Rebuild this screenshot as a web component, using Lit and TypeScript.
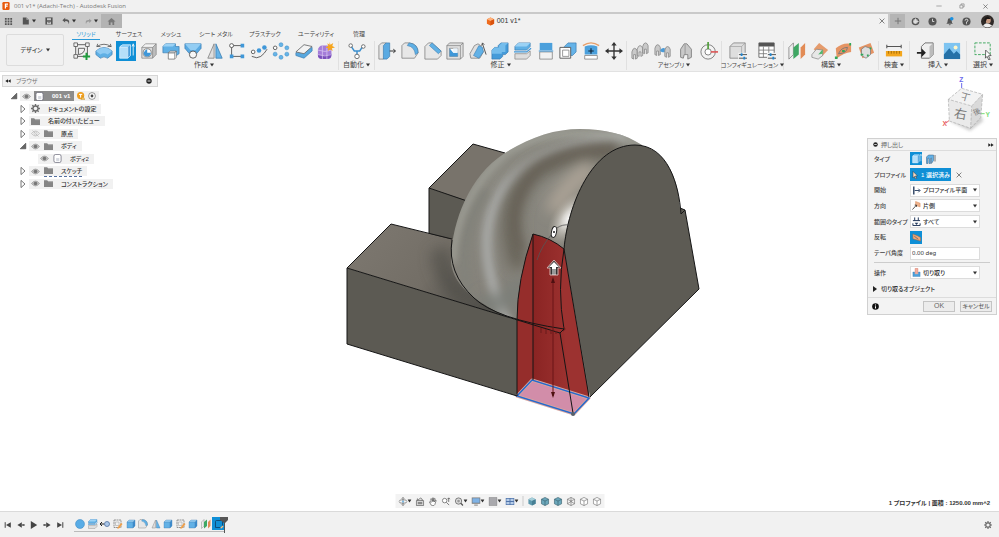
import { LitElement, html, css, svg, nothing } from "lit";
import { customElement } from "lit/decorators.js";

type Part = ReturnType<typeof svg>;

const box = (front = "#62b1e6", top = "#9bd2f5", side = "#3f8fd0", edge = "#3478ad") => svg`
  <path d="M2 6 6 2h12l-4 4z" fill=${top}/><path d="M2 6h12v12H2z" fill=${front}/>
  <path d="m14 6 4-4v12l-4 4z" fill=${side}/><path d="M2 6 6 2h12v12l-4 4H2zM2 6h12v12M14 6l4-4" fill="none" stroke=${edge} stroke-width=".7"/>`;
const grayBox = () => box("#dcdcdc", "#f3f3f3", "#bdbdbd", "#777");
const bracket = (x: number, y: number, c = "#c9c9c9") => svg`<path d=${`M${x} ${y + 11}V${y + 4}q1-4 3-4t3 3v8l-2 1v-5h-2v5z`} fill=${c} stroke="#808080" stroke-width=".8"/>`;
const adjust = svg`<path d="M11 14h9M11 18h9" stroke="#333" stroke-width=".9"/><path d="M14 12.500v3M17 16.500v3" stroke="#1f86d0" stroke-width="2"/>`;

const ICONS: Record<string, Part> = {
  sketch: svg`<path d="M3 3h13v13H3z" fill="none" stroke="#555" stroke-width="1"/><path d="M1 1h4v4H1zM14 1h4v4h-4zM1 14h4v4H1z" fill="#f1f1f1" stroke="#555" stroke-width=".9"/><path d="M6 7h7q0 6-7 7z" fill="none" stroke="#555"/><path d="M15 12v8M11 16h8" stroke="#1f9d3d" stroke-width="2.2"/>`,
  form: svg`<path d="M1 10q9-8 18 0v4l-5 4q-4-3-8 0l-5-4z" fill="#5fb0e5" stroke="#3478ad" stroke-width=".7"/><path d="M1 10q9-8 18 0l-5 4q-4-3-8 0z" fill="#8fcbf3"/><path d="M2 5q8-5 16 0M2 5l1-3M2 5h4M18 5l-1-3M18 5h-4" stroke="#555" fill="none" stroke-width=".9"/>`,
  extrude: svg`<path d="M3 5q1-2 3-2h9v12l-3 3H3z" fill="#8ccdf6"/><path d="M3 6h9v12H3z" fill="#b5dff9"/><path d="m12 6 3-3v12l-3 3z" fill="#4c9edb"/><path d="M3 6 6 3h9v12l-3 3H3zM3 6h9v12" fill="none" stroke="#e9f6ff" stroke-width=".7"/><path d="M18 3v12M16.800 5 18 2l1.200 3" stroke="#fff" fill="none" stroke-width=".9"/>`,
  hole: svg`${grayBox()}<circle cx="8" cy="12" r="4.500" fill="#fff" stroke="#666" stroke-width=".8"/><path d="M8 8v4h4q0 4-4 4t-4-4q2-4 4-4" fill="#3f97d8"/>`,
  combine2: svg`<path d="M1 5 4 2h11v3h4v8l-3 2H8v-3H1z" fill="#60b0e5" stroke="#3478ad" stroke-width=".7"/><path d="M1 5h11l3-3H4z" fill="#9bd2f5"/><path d="M7 12h7v7H7z" fill="#fff" stroke="#666" stroke-width=".8"/><path d="m7 12 2-2h7l-2 2zM14 12l2-2v7l-2 2" fill="#ddd" stroke="#666" stroke-width=".6"/>`,
  loft: svg`<path d="M1 2h18v5l-5 6H6L1 7z" fill="#5aaae2" stroke="#3478ad" stroke-width=".7"/><path d="m1 2 6 7h6l6-7z" fill="#93cdf3"/><circle cx="10" cy="14" r="4" fill="#f7f7f7" stroke="#555" stroke-width="1"/>`,
  mirror: svg`<path d="M9 2v16H2z" fill="#ddd" stroke="#777" stroke-width=".8"/><path d="M11 2v16h7z" fill="#65b3e8" stroke="#3478ad" stroke-width=".8"/>`,
  nodes: svg`<path d="M4 4h12M4 4v12M4 16h12" stroke="#555" fill="none" stroke-width="1"/><circle cx="4" cy="4" r="2.200" fill="#fff" stroke="#555"/><path d="M14 2h4v4h-4zM2 14h4v4H2zM14 14h4v4h-4z" fill="#3f97d8"/>`,
  path: svg`<path d="M2 16q6 3 10 0t7-8" fill="none" stroke="#555" stroke-width="1"/><circle cx="3.500" cy="11" r="2" fill="#fff" stroke="#555"/><circle cx="10" cy="9.500" r="2.500" fill="#3f97d8"/><circle cx="16" cy="6" r="2.500" fill="#3f97d8"/>`,
  circlePattern: svg`<g fill="#66b4e8" stroke="#3f8fc8" stroke-width=".6"><circle cx="10" cy="3" r="2.200"/><circle cx="16.500" cy="6.500" r="2.200"/><circle cx="16.500" cy="13.500" r="2.200"/><circle cx="10" cy="17" r="2.200"/><circle cx="3.500" cy="13.500" r="2.200"/></g><circle cx="3.500" cy="6.500" r="2" fill="#fff" stroke="#555"/>`,
  thicken: svg`<path d="m1 12 9-8 9 2v4l-9 8-9-3z" fill="#58a8df" stroke="#3478ad" stroke-width=".7"/><path d="m1 11 9-8 9 2-9 8z" fill="#f3f3f3" stroke="#666" stroke-width=".9"/>`,
  freeform: svg`<rect x="1" y="4" width="15" height="15" rx="5" fill="#a47cd8"/><path d="M1 14q7 3 15-1v2q0 4-5 4H6q-5 0-5-4z" fill="#7a4fbb"/><path d="M6 4v15M11 5v14M1 9q8 3 15 0M1 14q8 3 15 0" stroke="#dac7f2" stroke-width=".8" fill="none"/><path d="m14 0 1 3 3-2-1 3.500 3 1.500-3.500 1 1 3-3-2-2.500 2 .5-3-3-1 3-1.500-1-3 2.500 1.500z" fill="#f6a51c"/>`,
  automate: svg`<path d="m3 4 4 6h6l4-6M10 10v6" fill="none" stroke="#3b8fce" stroke-width="1.600"/><g fill="#fff" stroke="#666"><circle cx="3" cy="4" r="2"/><circle cx="17" cy="5" r="2"/><circle cx="10" cy="16" r="2.500"/></g>`,
  press: svg`<path d="M1 4 4 1h5v15l-3 3H1z" fill="#e5e5e5" stroke="#777" stroke-width=".8"/><path d="m6 4 3-3h4v15l-3 3H6z" fill="#5aaae2" stroke="#3478ad" stroke-width=".7"/><path d="M13 10h6M17 8l2.500 2L17 12" stroke="#222" fill="none" stroke-width="1"/>`,
  fillet: svg`<path d="M1 4 4 1h5q10 1 10 11l-4 6H1z" fill="#e7e7e7" stroke="#777" stroke-width=".8"/><path d="M7 4 9 1q10 1 10 11l-3 2Q15 5 7 4z" fill="#5fb0e5" stroke="#3478ad" stroke-width=".6"/>`,
  chamfer: svg`<path d="M1 5 5 1h4l10 9v5l-4 4H1z" fill="#e7e7e7" stroke="#777" stroke-width=".8"/><path d="m6 4 3-3 10 9-3 3z" fill="#5fb0e5" stroke="#3478ad" stroke-width=".6"/>`,
  shell: svg`<path d="M1 4 4 1h15v15l-3 3H1z" fill="#e0e0e0" stroke="#777" stroke-width=".8"/><path d="M1 4h15v15M16 4l3-3" fill="none" stroke="#777" stroke-width=".7"/><path d="M4 7h9v9H4z" fill="#fff" stroke="#666" stroke-width=".7"/><path d="M4 7l4 5h5v4H4z" fill="#3f97d8"/><path d="M8 7v5h5V7z" fill="#e8f3fb"/>`,
  draft: svg`<path d="M1 13 6 4l4-2 3 2 3 7-4 7H2z" fill="#e0e0e0" stroke="#777" stroke-width=".8"/><path d="m5 15 6-11 4 2 1 5-5 7z" fill="#62b1e6" stroke="#3478ad" stroke-width=".6"/><path d="m19 14-4-12M14 4l1-3 2 2" stroke="#333" fill="none" stroke-width=".9"/>`,
  combine: svg`<path d="M1 9 4 6h4V4l3-3h8v10l-3 3h-3v2l-3 3H1z" fill="#459bd9" stroke="#3478ad" stroke-width=".7"/><path d="M1 9 4 6h5V4l3-3h7l-3 3v7h-4v2H1z" fill="#75bdec"/>`,
  offset: svg`<path d="m1 5 4-4h13v4l-4 4H1z" fill="#60b0e5" stroke="#3478ad" stroke-width=".7"/><path d="m1 5 4-4h13l-4 4z" fill="#9bd2f5"/><path d="M0 11h14l5-4" stroke="#3f97d8" stroke-width="1.300" fill="none"/><path d="M1 13h13l4-3v5l-4 4H1z" fill="#dedede" stroke="#777" stroke-width=".7"/>`,
  split: svg`<path d="M3 1h14v8H3z" fill="#4ba0dc"/><path d="M3 11h14v8H3z" fill="#f2f2f2" stroke="#777" stroke-width=".8"/><path d="M2 10h16" stroke="#3f97d8" stroke-width="1.200"/>`,
  scale: svg`<path d="M6 5 10 1h9v10l-4 4H6z" fill="#65b3e8" stroke="#3478ad" stroke-width=".7"/><path d="M1 6h12v12H1z" fill="#fff" stroke="#555" stroke-width="1"/><path d="M4 9h7v7H4z" fill="#fff" stroke="#777" stroke-width=".8"/>`,
  replace: svg`<path d="M1 4q9-6 18 0" stroke="#e7a06c" fill="none" stroke-width="1.500"/><path d="M3 5q7-3 14 0v9H3z" fill="#4ba0dc"/><path d="M3 15h14v4H3z" fill="#fff" stroke="#777" stroke-width=".8"/><path d="M10 7v6M7 10h6" stroke="#123" stroke-width="1.200"/>`,
  move: svg`<path d="M10 2v16M2 10h16" stroke="#333" stroke-width="1.500"/><path d="m10 0 3 4H7zM10 20l3-4H7zM0 10l4-3v6zM20 10l-4-3v6z" fill="#333"/>`,
  asm1: svg`${bracket(1, 7)}${bracket(7, 4, "#dadada")}${bracket(13, 1)}`,
  asm2: svg`${bracket(1, 3)}<path d="M7 9q2-3 5-2v4q-3 1-5-1z" fill="#4a9bd8"/>${bracket(12, 5)}`,
  asm3: svg`<path d="M4 17V8l4-6h3l5 6v9l-4 2v-5H8l-1 4z" fill="#c9c9c9" stroke="#777" stroke-width=".9"/><path d="M9 3v11" stroke="#888" stroke-width=".8"/>`,
  joint: svg`<circle cx="9" cy="11" r="8" fill="#f3f3f3" stroke="#777"/><circle cx="9" cy="11" r="3.500" fill="#fff" stroke="#777"/><path d="M9 8V0" stroke="#4b9b35" stroke-width="1.800"/><path d="M12 11h8" stroke="#dc5858" stroke-width="1.800"/>`,
  config: svg`<path d="M1 5 5 1h13v13l-4 4H1z" fill="#dedede" stroke="#777" stroke-width=".8"/><path d="M1 5h13v13M14 5l4-4" fill="none" stroke="#999" stroke-width=".7"/><path d="M10 12h10v8H10z" fill="#f1f1f1"/>${adjust}`,
  table: svg`<path d="M1 1h17v16H1z" fill="#fff" stroke="#666"/><path d="M1 1h17v4H1z" fill="#555"/><path d="M1 9h17M1 13h17M6 5v12M12 5v12" stroke="#777" stroke-width=".9"/><path d="M10 12h10v8H10z" fill="#f1f1f1"/>${adjust}`,
  plane1: svg`<path d="M1 6 6 1v13l-5 5z" fill="#eee" stroke="#777" stroke-width=".8"/><path d="m6 6 6-5v13l-6 5z" fill="#3fa864"/><path d="m14 6 5-5v13l-5 5z" fill="#e28b55"/>`,
  plane2: svg`<path d="m9 1 10 8-7 7-9-8z" fill="#e59b6c"/><path d="m1 14 5-6 7 1v6l-5 4-7-2z" fill="#e7e7e7" stroke="#777" stroke-width=".7"/><path d="m13 8-5 6 5-1z" fill="#50b86c"/>`,
  plane3: svg`<path d="M2 7q8-7 17-5v9q-8 1-16 7z" fill="#e59464"/><path d="M5 13q3-7 10-7-1 7-10 7" fill="none" stroke="#777" stroke-width="1"/><path d="M1 16h3v3H1zM17 1h2v3h-2zM9 9h3v2H9z" fill="#2fa85a"/>`,
  plane4: svg`<path d="m2 6 13-5 4 11-13 6z" fill="#e59464"/><path d="m5 8 4-3 6 2v7l-5 4-5-3z" fill="#ddd" stroke="#777" stroke-width=".8"/><path d="M14 6h2v2h-2zM4 13h3v2H4zM11 14h2v2h-2z" fill="#2fa85a"/>`,
  ruler: svg`<path d="M2 5h16M2 3v4M18 3v4" stroke="#555" stroke-width="1.200"/><path d="M1 10h18v6H1z" fill="#f3a61d"/><path d="M4 10v3M7 10v3M10 10v3M13 10v3M16 10v3" stroke="#8a5a00" stroke-width=".8"/>`,
  insert: svg`<path d="m6 5 4-4h9v13l-4 4H6z" fill="#eee" stroke="#666"/><path d="m15 5 4-4v13l-4 4z" fill="#bbb"/><path d="M1 11h5V7l5 5-5 5v-4H1z" fill="#222"/>`,
  image: svg`<path d="M1 1h18v18H1z" fill="#7ec4f1"/><path d="M1 14 7 7l5 6 3-3 4 4v5H1z" fill="#2471a8"/><circle cx="14" cy="6" r="2.200" fill="#fff6c8"/>`,
  select: svg`<path d="M1 1h17v13H1z" fill="none" stroke="#35a457" stroke-width="1" stroke-dasharray="3 1.500"/><path d="m13 9 6 6-3 .3 2 4-1.500.7-2-4-1.800 2z" fill="#fff" stroke="#333" stroke-width=".8"/>`,
  grid: svg`<g fill="#555"><path d="M2 2h4v4H2zM8 2h4v4H8zM14 2h4v4h-4zM2 8h4v4H2zM8 8h4v4H8zM14 8h4v4h-4zM2 14h4v4H2zM8 14h4v4H8zM14 14h4v4h-4z"/></g>`,
  file: svg`<path d="M2 1h9l6 6v12H2z" fill="#555"/><path d="M11 1v6h6" fill="#aaa"/>`,
  save: svg`<path d="M1 1h18v18H1z" fill="#555"/><path d="M5 3h10v5H5zM5 12h10v6H5z" fill="#c9c9c9"/><path d="M7 14h6" stroke="#555" stroke-width="1.500"/>`,
  undo: svg`<path d="M8 2 1 8l7 6v-4q8-1 9 8 4-13-9-12z" fill="#555"/>`,
  redo: svg`<path d="m12 2 7 6-7 6v-4q-8-1-9 8-4-13 9-12z" fill="#999"/>`,
  home: svg`<path d="M10 2 1 10h3v8h12v-8h3z" fill="#777"/><path d="M8 12h4v6H8z" fill="#b3b3b3"/>`,
  cube: svg`<path d="m10 1 8 4v10l-8 4-8-4V5z" fill="#ee6a1c"/><path d="m10 1 8 4-8 4-8-4z" fill="#ffb27c"/><path d="m10 9 8-4v10l-8 4z" fill="#d9520d"/>`,
  logo: svg`<rect x="1" y="0" width="18" height="20" rx="3" fill="#e8590c"/><path d="M7 4h8v3h-5v2h4v3h-4v4H7z" fill="#fff"/>`,
  plus: svg`<path d="M10 2v16M2 10h16" stroke="#777" stroke-width="2.500"/>`,
  close: svg`<path d="m4 4 12 12M16 4 4 16" stroke="#555" stroke-width="1.800"/>`,
  min: svg`<path d="M1 10h18" stroke="#777" stroke-width="2"/>`,
  max: svg`<path d="M3 7h10v10H3zM7 7V3h10v10h-4" fill="none" stroke="#777" stroke-width="2"/>`,
  ext: svg`<circle cx="10" cy="10" r="7" fill="none" stroke="#555" stroke-width="3"/><path d="M10 3v7h7" stroke="#ddd" stroke-width="2" fill="none"/><circle cx="9" cy="11" r="3" fill="#ddd"/>`,
  clock: svg`<circle cx="10" cy="10" r="9" fill="#555"/><path d="M10 4v6h4" stroke="#ddd" stroke-width="2" fill="none"/>`,
  bell: svg`<path d="M3 15q3-2 3-7t4-5q5 0 5 6t3 6zM8 16h5l-2 3z" fill="#555"/><circle cx="15" cy="4" r="4" fill="#1a90e0"/>`,
  help: svg`<circle cx="10" cy="10" r="9" fill="#555"/><path d="M7 8q0-3 3-3t3 3q0 2-3 3v2M10 14v2" stroke="#eee" stroke-width="2" fill="none"/>`,
  avatar: svg`<circle cx="10" cy="10" r="10" fill="#2f2a28"/><ellipse cx="11" cy="8" rx="4" ry="5" fill="#c79a82"/><path d="M3 17q3-5 7-4l3 1 4 2q-6 6-14 1" fill="#eee"/><path d="M5 8q1-7 8-5l2 3-6 0-2 5z" fill="#1c1817"/>`,
  eye: svg`<path d="M1 10q9-11 18 0-9 11-18 0z" fill="#c4c4c4" stroke="#8a8a8a" stroke-width="1.300"/><circle cx="10" cy="10" r="4" fill="#777"/>`,
  eyeOff: svg`<path d="M1 10q9-11 18 0-9 11-18 0z" fill="none" stroke="#aaa" stroke-width="1.300"/><circle cx="10" cy="10" r="3.500" fill="none" stroke="#aaa"/><path d="m3 3 14 14" stroke="#aaa"/>`,
  folder: svg`<path d="M0 3h7l2 2h11v13H0z" fill="#858585"/><path d="M9 6h11" stroke="#c2c2c2" stroke-width="1"/>`,
  gear: svg`<path d="M10 0v20M0 10h20M3 3l14 14M17 3 3 17" stroke="#6d6d6d" stroke-width="3"/><circle cx="10" cy="10" r="7" fill="#6d6d6d"/><circle cx="10" cy="10" r="4" fill="#f3f3f3"/>`,
  body: svg`<rect x="2" y="1" width="16" height="18" rx="4" fill="#fff" stroke="#667" stroke-width="1.600"/><path d="M7 9h7v7H7z" fill="#d5d8df"/>`,
  open: svg`<path d="M17 3v14H3z" fill="#666" stroke="#444" stroke-width="1.500"/>`,
  shut: svg`<path d="M5 1v18l10-9z" fill="#fff" stroke="#555" stroke-width="2"/>`,
  warn: svg`<circle cx="9" cy="9" r="9" fill="#f0a020"/><path d="M5 6h8M9 6v8" stroke="#fff" stroke-width="2.500"/><path d="m15 11 5 8H10z" fill="#f6c35a" stroke="#a86c00" stroke-width=".8"/>`,
  radio: svg`<circle cx="10" cy="10" r="8.500" fill="#fff" stroke="#555" stroke-width="1.500"/><circle cx="10" cy="10" r="3.500" fill="#444"/>`,
  left2: svg`<path d="M10 4v12L1 10zM19 4v12l-9-6z" fill="#222"/>`,
  right2: svg`<path d="M10 4v12l9-6zM1 4v12l9-6z" fill="#222"/>`,
  dot: svg`<circle cx="10" cy="10" r="9" fill="#222"/><path d="M5 10h10" stroke="#fff" stroke-width="3"/>`,
  info: svg`<circle cx="10" cy="10" r="9.500" fill="#111"/><path d="M10 4v3M10 9v7" stroke="#fff" stroke-width="3"/>`,
  start: svg`<path d="M4 1v18" stroke="#23395b" stroke-width="3"/><path d="M6 10h11M14 6l4 4-4 4" stroke="#23395b" stroke-width="2" fill="none"/>`,
  side: svg`<path d="m8 1 10 4v8L8 10z" fill="#f0b48e" stroke="#d37c46"/><path d="m1 19 9-10M6 9h4v4" stroke="#333" fill="none" stroke-width="1.800"/>`,
  all: svg`<path d="M2 14v5h16v-5M2 8h16M6 1v7M14 1v7" stroke="#23395b" stroke-width="2.200" fill="none"/><path d="m10 18-4-5h8z" fill="#23395b"/>`,
  flip: svg`<path d="m2 2 10 4 7 4v8L2 13z" fill="#f0a878" stroke="#a0623a" stroke-width="1"/><path d="M5 7l9 7" stroke="#45576a" stroke-width="1.500"/>`,
  cut: svg`<path d="M2 9h4v5h8V9h4v10H2z" fill="#4ba0dc" stroke="#3478ad" stroke-width=".8"/><path d="M7 1h6v11H7z" fill="#f3b0a0" stroke="#d26a58" stroke-width="1"/>`,
  cursor: svg`<path d="m5 1 11 11-5 .5 3 6-3 1-2.500-6L5 17z" fill="#f5d9c5" stroke="#333" stroke-width="1.200"/>`,
  thin: svg`<path d="m1 6 4-4h10v11l-4 6V8l-2 1v10H6V9L4 8v11H1z" fill="#62b1e6" stroke="#345c80" stroke-width="1"/><path d="M18 2v13" stroke="#333" stroke-width="1.300"/>`,
  orbit: svg`<ellipse cx="10" cy="10" rx="9" ry="4" fill="none" stroke="#555" stroke-width="1.300"/><path d="M10 1v18M7 4l3-3 3 3M7 16l3 3 3-3" fill="none" stroke="#555" stroke-width="1.300"/><circle cx="10" cy="10" r="2.500" fill="#80bde6"/>`,
  look: svg`<path d="M2 8h16v11H2zM4 8V4l3 2 4-4 4 3v3" fill="#ddd" stroke="#555" stroke-width="1.500"/><path d="M5 11h10v5H5z" fill="#888"/>`,
  hand: svg`<path d="m6 18-4-7 1-1 3 2L5 4h2l2 6V2h2v8l2-7 2 1-2 7 3-4 1 1-3 9-2 2H8z" fill="#fff" stroke="#444" stroke-width="1.300"/>`,
  zoomPan: svg`<circle cx="7" cy="8" r="5" fill="#fff" stroke="#555" stroke-width="1.500"/><path d="m11 12 6 6M16 2v9M13 5l3-3 3 3" stroke="#555" stroke-width="1.700" fill="none"/>`,
  fit: svg`<circle cx="9" cy="9" r="7" fill="#ddd" stroke="#555" stroke-width="1.600"/><circle cx="9" cy="9" r="3" fill="#999"/><path d="m14 14 5 5" stroke="#555" stroke-width="3"/>`,
  display: svg`<path d="M0 1h20v14H0z" fill="#777"/><path d="M2 3h16v10H2z" fill="#7fb2e5"/><path d="M6 18h8" stroke="#777" stroke-width="2"/>`,
  shade: svg`<path d="M1 1h18v18H1z" fill="#a9a9ad" stroke="#777"/>`,
  views: svg`<path d="M0 2h20v16H0z" fill="#4f73aa"/><path d="M2 4h7v5H2zM11 4h7v5h-7zM2 11h7v5H2zM11 11h7v5h-7z" fill="#b6cde9"/>`,
  solidBox: svg`<path d="m10 1 8 4v10l-8 4-8-4V5z" fill="#5c98ad"/><path d="m10 1 8 4-8 4-8-4z" fill="#a6cfda"/><path d="m10 9 8-4v10l-8 4z" fill="#477f94"/>`,
  solidEdge: svg`<path d="m10 1 8 4v10l-8 4-8-4V5z" fill="#6ba7bb" stroke="#375f6e" stroke-width="1.400"/><path d="m2 5 8 4 8-4M10 9v10" fill="none" stroke="#375f6e" stroke-width="1.400"/>`,
  wire: svg`<path d="m10 1 8 4v10l-8 4-8-4V5zM2 5l8 4 8-4M10 9v10M2 15l8-5 8 5M10 1v9" fill="none" stroke="#666" stroke-width="1.300"/>`,
  wireFront: svg`<path d="m10 1 8 4v10l-8 4-8-4V5zM2 5l8 4 8-4M10 9v10" fill="#fff" stroke="#666" stroke-width="1.300"/>`,
  first: svg`<path d="M3 3v14" stroke="#444" stroke-width="2.500"/><path d="M17 3v14L5 10z" fill="#444"/>`,
  prev: svg`<path d="M12 3v14L1 10z" fill="#444"/><path d="M13 10h6" stroke="#444" stroke-width="4"/>`,
  play: svg`<path d="M2 0v20l16-10z" fill="#444"/>`,
  next: svg`<path d="M8 3v14l11-7z" fill="#444"/><path d="M1 10h6" stroke="#444" stroke-width="4"/>`,
  last: svg`<path d="M17 3v14" stroke="#444" stroke-width="2.500"/><path d="M3 3v14l12-7z" fill="#444"/>`,
  sphere: svg`<circle cx="10" cy="10" r="9" fill="#58ace6" stroke="#3b87c0"/>`,
  tlSketch: svg`<path d="M2 2h14v15H2z" fill="none" stroke="#777" stroke-width="1.500" stroke-dasharray="4 1"/><path d="M5 6h7v7H5z" fill="none" stroke="#999"/><path d="m9 17 7-9 3 2-6 8-4 2z" fill="#f0a04a"/>`,
  tlMove: svg`<path d="M0 10h9M4 6l-4 4 4 4" stroke="#222" stroke-width="2" fill="none"/><circle cx="14" cy="10" r="5" fill="#abc7e8" stroke="#4b6b9b" stroke-width="1.500"/>`,
  tlCurrent: svg`<path d="M3 5q0-2 2-2h12v11l-3 3H3z" fill="none" stroke="#0b3d66" stroke-width="1.600"/><path d="m12 18 5-5 2 2-4 4z" fill="#f0c48a"/>`,
};
ICONS.solid = box();

const icon = (name: string, size: number) => html`<svg class="ic" viewBox="0 0 20 20" width=${size} height=${size} aria-hidden="true">${ICONS[name]}</svg>`;
const caret = html`<svg class="ic" viewBox="0 0 4 4" width="4" height="4" aria-hidden="true"><path d="M0 .5h4L2 3.500z" fill="#333"/></svg>`;

const shared = css`
  * { box-sizing: border-box; }
  .ic { display: block; flex: none; }
  button { font: inherit; color: inherit; background: none; border: 0; padding: 0; margin: 0;
    display: flex; align-items: center; justify-content: center; cursor: pointer; white-space: nowrap; }
`;

@customElement("title-area")
export class TitleArea extends LitElement {
  static styles = [shared, css`
    :host { display: block; background: #f1f1f1; }
    .title { display: flex; align-items: center; height: 12px; padding: 0 10px 0 2px; color: #777; }
    .name { margin-left: 4px; flex: 1; font: 6px "Open Sans", sans-serif; }
    .controls { display: flex; gap: 17px; }
    .bar { display: flex; height: 16px; background: #c9c9c9; border-top: 2px solid #c9c9c9; }
    .quick { display: flex; align-items: center; width: 101px; padding-left: 4px; gap: 9px; }
    .pair { gap: 2px; }
    .home { width: 21px; background: #b3b3b3; }
    .doc { flex: 1; display: flex; align-items: center; background: #f1f1f1; padding-right: 2px; }
    .tab { flex: 1; display: flex; justify-content: center; align-items: center; gap: 2px; padding-left: 6px; color: #333; font-size: 7px; }
    .add { width: 15px; background: #b5b5b5; margin-left: 2px; }
    .status { display: flex; align-items: center; gap: 8px; padding: 0 5px 0 6px; }
    .status .wide { margin-left: 2px; }
  `];
  render() {
    return html`
      <div class="title">${icon("logo", 8)}<span class="name">001 v1* (Adachi-Tech) - Autodesk Fusion</span>
        <div class="controls">
          <button aria-label="最小化">${icon("min", 6)}</button><button aria-label="元に戻す">${icon("max", 6)}</button><button aria-label="閉じる">${icon("close", 7)}</button>
        </div>
      </div>
      <div class="bar">
        <div class="quick">
          <button aria-label="データ パネル">${icon("grid", 9)}</button>
          <button class="pair" aria-label="ファイル">${icon("file", 8)}${caret}</button>
          <button aria-label="保存">${icon("save", 8)}</button>
          <button class="pair" aria-label="取り消し">${icon("undo", 8)}${caret}</button>
          <button class="pair" aria-label="やり直し">${icon("redo", 7)}${caret}</button>
        </div>
        <button class="home" aria-label="ホーム">${icon("home", 9)}</button>
        <div class="doc"><div class="tab">${icon("cube", 9)}<span>001 v1*</span></div><button aria-label="タブを閉じる">${icon("close", 8)}</button></div>
        <button class="add" aria-label="新規タブ">${icon("plus", 8)}</button>
        <div class="status">
          ${["ext", "clock", "bell", "help"].map((n) => html`<button aria-label=${n}>${icon(n, 9)}</button>`)}
          <button class="wide" aria-label="アカウント">${icon("avatar", 13)}</button>
        </div>
      </div>`;
  }
}

const GROUPS: { label: string; kana?: boolean; icons: string[] }[] = [
  { label: "作成", icons: ["sketch", "form", "extrude", "hole", "combine2", "loft", "mirror", "nodes", "path", "circlePattern", "thicken", "freeform"] },
  { label: "自動化", icons: ["automate"] },
  { label: "修正", icons: ["press", "fillet", "chamfer", "shell", "draft", "combine", "offset", "split", "scale", "replace", "move"] },
  { label: "アセンブリ", kana: true, icons: ["asm1", "asm2", "asm3", "joint"] },
  { label: "コンフィギュレーション", kana: true, icons: ["config", "table"] },
  { label: "構築", icons: ["plane1", "plane2", "plane3", "plane4"] },
  { label: "検査", icons: ["ruler"] },
  { label: "挿入", icons: ["insert", "image"] },
  { label: "選択", icons: ["select"] },
];

@customElement("tool-ribbon")
export class ToolRibbon extends LitElement {
  static styles = [shared, css`
    :host { display: flex; box-sizing: border-box; height: 44px; background: #f1f1f1; border-bottom: 1px solid #e2e2e2; padding-left: 6px; color: #444; }
    .workspace { width: 58px; height: 32px; margin: 6px 6px 0 0; border: 1px solid #dcdcdc; border-radius: 2px; gap: 3px; font-weight: 500; }
    .main { flex: 1; min-width: 0; display: flex; flex-direction: column; }
    .tabs { display: grid; grid-template-columns: 38px 42px 42px 48px 50px 52px 34px; height: 12px; align-items: end; justify-items: center; }
    .tab { height: 11px; width: 28px; border-bottom: 1px solid transparent; }
    .tab.on { justify-self: start; margin-left: 2px; color: #2a9ad8; border-bottom-color: #2a9ad8; }
    .groups { display: grid; grid-template-columns: 269fr 36fr 252fr 95fr 62fr 95fr 31fr 57fr 32fr; height: 30px; padding-top: 1px; }
    .group { min-width: 0; display: flex; flex-direction: column; padding: 0 1px; border-right: 1px solid #e0e0e0; }
    .group:last-child { border-right: 0; }
    .icons { display: flex; justify-content: space-around; height: 19px; align-items: center; }
    .tool { width: 20px; height: 20px; }
    .tool.on { background: #0f8fd6; }
    .label { height: 10px; gap: 2px; font-size: 7px; }
    .kana { font-size: 6px; }
  `];
  render() {
    const tabs = ["ソリッド", "サーフェス", "メッシュ", "シート メタル", "プラスチック", "ユーティリティ", "管理"];
    return html`
      <button class="workspace">デザイン ${caret}</button>
      <div class="main">
        <div class="tabs" role="tablist">${tabs.map((t, i) => html`<button role="tab" class="tab ${i ? "" : "on"}">${t}</button>`)}</div>
        <div class="groups">${GROUPS.map((g) => html`<div class="group">
          <div class="icons">${g.icons.map((n) => html`<button class="tool ${n === "extrude" ? "on" : ""}" aria-label=${n}>${icon(n, 18)}</button>`)}</div>
          <button class="label ${g.kana ? "kana" : ""}">${g.label}${caret}</button></div>`)}</div>
      </div>`;
  }
}

interface TreeNode { depth: number; arrow?: string; eye?: string; icon: string; text: string; kind?: string }
const TREE: TreeNode[] = [
  { depth: 0, arrow: "open", eye: "eye", icon: "body", text: "001 v1", kind: "root" },
  { depth: 1, arrow: "shut", icon: "gear", text: "ドキュメントの設定" },
  { depth: 1, arrow: "shut", icon: "folder", text: "名前の付いたビュー" },
  { depth: 1, arrow: "shut", eye: "eyeOff", icon: "folder", text: "原点" },
  { depth: 1, arrow: "open", eye: "eye", icon: "folder", text: "ボディ" },
  { depth: 2, eye: "eye", icon: "body", text: "ボディ2" },
  { depth: 1, arrow: "shut", eye: "eye", icon: "folder", text: "スケッチ", kind: "dashed" },
  { depth: 1, arrow: "shut", eye: "eye", icon: "folder", text: "コンストラクション" },
];

@customElement("browser-panel")
export class BrowserPanel extends LitElement {
  static styles = [shared, css`
    :host { display: block; width: 156px; color: #333; }
    .head { display: flex; align-items: center; gap: 5px; height: 12px; padding: 0 5px 0 2px; background: #f1f1f1; border: 1px solid #d6d6d6; color: #777; }
    .head span { flex: 1; }
    ul { list-style: none; margin: 3px 0 0; padding: 0 0 0 8px; height: 100px; display: grid; grid-auto-rows: 1fr; }
    li { display: flex; align-items: center; gap: 2px; }
    .d1 { padding-left: 9px; }
    .d2 { padding-left: 28px; }
    .chip { display: flex; align-items: center; gap: 4px; height: 10px; padding: 0 5px 0 2px; background: #f1f1f1; font-weight: 500; white-space: nowrap; }
    .item { display: flex; align-items: center; gap: 8px; }
    .root { background: #8c8c8c; color: #fff; padding: 0 4px 0 1px; font-weight: 700; }
    .rootchip { padding-right: 3px; gap: 3px; }
    .dashed { border-bottom: 1px dashed #5570a0; }
  `];
  render() {
    return html`
      <div class="head">${icon("left2", 6)}<span>ブラウザ</span>${icon("dot", 6)}</div>
      <ul>${TREE.map((n) => html`<li class="d${n.depth}">
        ${n.arrow ? icon(n.arrow, 8) : nothing}
        <div class="chip ${n.kind === "root" ? "rootchip" : ""}">${n.eye ? icon(n.eye, 9) : nothing}
          <div class="item ${n.kind ?? ""}">${icon(n.icon, 9)}<span>${n.text}</span></div>
          ${n.kind === "root" ? html`${icon("warn", 8)}${icon("radio", 8)}` : nothing}
        </div></li>`)}</ul>`;
  }
}

@customElement("drop-field")
export class DropField extends LitElement {
  static properties = { glyph: {}, value: {}, label: {} };
  declare glyph: string;
  declare value: string;
  declare label: string;
  static styles = [shared, css`
    :host { display: flex; box-sizing: border-box; align-items: center; height: 13px; width: 70px; padding: 0 2px 0 1px; background: #fff; border: 1px solid #dcdcdc; }
    select { flex: 1; min-width: 0; height: 11px; appearance: none; border: 0; padding: 0 0 0 2px; background: none; font: inherit; font-feature-settings: inherit; color: #333; }
  `];
  render() {
    return html`${icon(this.glyph, 9)}<select aria-label=${this.label}><option>${this.value}</option></select>${caret}`;
  }
}

@customElement("extrude-dialog")
export class ExtrudeDialog extends LitElement {
  static styles = [shared, css`
    :host { display: block; box-sizing: border-box; width: 130px; background: #f3f3f3; border: 1px solid #d0d0d0; color: #444; font-weight: 500; }
    .head { display: flex; align-items: center; gap: 3px; height: 12px; padding: 0 2px 0 5px; border-bottom: 1px solid #dcdcdc; color: #777; }
    .head span { flex: 1; }
    .rows { display: grid; grid-auto-rows: 1fr; height: 110px; padding-left: 6px; }
    .row { display: flex; align-items: center; }
    .row > :first-child, .op span { width: 36px; flex: none; white-space: nowrap; }
    .on { background: #0f8fd6; width: 12px; height: 13px; }
    .thin { margin-left: 4px; }
    .pick { background: #0f8fd6; color: #fff; width: 41px; height: 13px; gap: 2px; }
    .clear { margin-left: 4px; }
    input { width: 70px; height: 13px; border: 1px solid #dcdcdc; background: #fff; padding: 0 1px; font: 6px "Noto Sans", sans-serif; color: #333; }
    .op { display: flex; align-items: center; margin: 1px 6px 0 6px; padding-top: 2px; height: 18px; border-top: 1px solid #ccc; }
    .more { gap: 4px; height: 17px; padding-left: 5px; color: #333; }
    .foot { display: flex; align-items: center; gap: 5px; height: 17px; padding: 0 4px; border-top: 1px solid #dcdcdc; }
    .foot button { width: 32px; height: 11px; border: 1px solid #c4c4c4; background: #ececec; color: #666; }
    .foot .ok { font-size: 7px; }
    .foot .ic { margin-right: auto; }
  `];
  render() {
    const drops = [["開始", "start", "プロファイル平面"], ["方向", "side", "片側"], ["範囲のタイプ", "all", "すべて"]];
    return html`
      <div class="head">${icon("dot", 5)}<span>押し出し</span>${icon("right2", 6)}</div>
      <div class="rows">
        <div class="row"><span>タイプ</span><button class="on" aria-label="押し出し">${icon("extrude", 11)}</button><button class="thin" aria-label="薄い押し出し">${icon("thin", 10)}</button></div>
        <div class="row"><span>プロファイル</span><button class="pick">${icon("cursor", 8)}1 選択済み</button><button class="clear" aria-label="選択を解除">${icon("close", 8)}</button></div>
        ${drops.map((d) => html`<div class="row"><span>${d[0]}</span><drop-field .label=${d[0]} .glyph=${d[1]} .value=${d[2]}></drop-field></div>`)}
        <div class="row"><span>反転</span><button class="on" aria-label="反転">${icon("flip", 9)}</button></div>
        <div class="row"><label for="taper">テーパ角度</label><input id="taper" value="0.00 deg"></div>
      </div>
      <div class="op"><span>操作</span><drop-field .label=${"操作"} .glyph=${"cut"} .value=${"切り取り"}></drop-field></div>
      <button class="more"><svg class="ic" viewBox="0 0 4 6" width="4" height="6"><path d="M0 0v6l4-3z" fill="#222"/></svg>切り取るオブジェクト</button>
      <div class="foot">${icon("info", 7)}<button class="ok">OK</button><button>キャンセル</button></div>`;
  }
}

@customElement("part-model")
export class PartModel extends LitElement {
  static styles = css`
    :host { display: block; }
    svg { display: block; width: 100%; height: 100%; }
    .edge { fill: none; stroke: #151515; stroke-width: 1; stroke-linejoin: round; }
  `;
  render() {
    const shell = "M451 262C451 228 466 178 505 153 530 137 555 129 580 129 605 129 625 134 642 145L600 200 589 397 517 320C488 309 453 290 451 262z";
    return html`<svg viewBox="0 72 999 439" role="img" aria-label="押し出しカットの対象となる部品">
      <defs>
        <clipPath id="shell"><path d=${shell}/></clipPath>
        <filter id="soft" x="-40%" y="-40%" width="180%" height="180%"><feGaussianBlur stdDeviation="7"/></filter>
        <filter id="fine" x="-40%" y="-40%" width="180%" height="180%"><feGaussianBlur stdDeviation="3.500"/></filter>
        <linearGradient id="top" x1="0" y1="0" x2="1" y2=".5"><stop offset="0" stop-color="#7e7971"/><stop offset=".6" stop-color="#736e66"/><stop offset="1" stop-color="#4e4d48"/></linearGradient>
        <linearGradient id="base" x1="0" y1="0" x2="0" y2="1"><stop offset="0" stop-color="#8c8b83"/><stop offset=".6" stop-color="#85827a"/><stop offset="1" stop-color="#6c706b"/></linearGradient>
        <radialGradient id="shine"><stop offset="0" stop-color="#fff"/><stop offset=".35" stop-color="#e6e4df" stop-opacity=".8"/><stop offset="1" stop-color="#b5aea2" stop-opacity="0"/></radialGradient>
        <linearGradient id="wall" x1="0" y1="0" x2="1" y2="0"><stop offset="0" stop-color="#8a2423"/><stop offset="1" stop-color="#9d3230"/></linearGradient>
      </defs>
      <path d="M473 144 505 153 520 170 480 206 429 188z" fill="#78736b"/>
      <path d="M429 188 480 205V250L429 234z" fill="#5c5a53"/>
      <path class="edge" d="M505 153 473 144 429 188V234L452 240M429 188 470 202"/>
      <path d="M391 224 470 244 520 321 347 268z" fill="url(#top)"/>
      <path d="M450 246Q449 276 476 302L452 297Q428 275 432 250z" fill="#43423e" filter="url(#soft)" opacity=".5"/>
      <path d="M347 268 517 320V396L347 344z" fill="#5c5a53"/>
      <path d=${shell} fill="url(#base)"/>
      <g clip-path="url(#shell)" fill="none">
        <path d="M510 330Q465 235 508 183 545 143 625 137" stroke="#a5a6a3" stroke-width="11" filter="url(#fine)"/>
        <path d="M468 295Q456 235 486 190" stroke="#82827a" stroke-width="10" filter="url(#fine)"/>
        <path d="M453 262Q454 200 507 152 560 120 640 143" stroke="#b4b7ae" stroke-width="3" filter="url(#fine)"/>
        <path d="M520 268Q498 210 532 174 565 149 620 152" stroke="#686359" stroke-width="17" filter="url(#soft)"/>
        <path d="M522 250Q502 205 540 167 570 148 615 149" stroke="#665f54" stroke-width="9" filter="url(#fine)" opacity=".5"/>
        <path d="M553 212Q567 182 592 168" stroke="#aca396" stroke-width="17" filter="url(#soft)"/>
        <path d="M480 303Q510 309 522 280" stroke="#7b7f79" stroke-width="16" filter="url(#soft)"/>
        <ellipse cx="570" cy="218" rx="17" ry="31" fill="url(#shine)" transform="rotate(35 570 218)"/>
      </g>
      <path d="M564 249C568 205 592 145 635 145 665 145 679 180 680 208L685 210 699 289 590 397z" fill="#5d5b54"/>
      <path class="edge" d="M564 249C568 205 592 145 635 145 668 145 679 185 681 214L685 210 680 208M685 210 699 289 590 397"/>
      <path d="M533 234Q551 238 564 249L589 397 532 380 517 396V320Q517 280 533 234z" fill="#9c3230"/>
      <path d="M533 234V380L517 396V320Q517 280 533 234z" fill="#952d2b"/>
      <path d="M533 234Q551 238 564 249 557 290 564 331L569 391 533 380z" fill="url(#wall)"/>
      <path d="M517 396 532 380 589 398 574 414z" fill="#d28da9" stroke="#d9a7a0" stroke-width="3" stroke-linejoin="round"/>
      <path d="M517 396 532 380 589 398 574 414z" fill="none" stroke="#2369cf" stroke-width="1.500"/>
      <path class="edge" d="M452 240Q447 273 474 298 496 319 564 329L560 333 347 268V344L517 396V320Q517 280 533 234 551 238 564 249L589 397M347 268 391 224 452 239M533 234V380M564 249Q557 290 564 329M560 333 573 413"/>
      <circle cx="573" cy="414" r="2" fill="#56616b"/>
      <path d="M541 328v5M546 329v5M551 330v4M556 331v3M563 327q4 2 0 4" stroke="#681b1a" fill="none" stroke-width="1"/>
      <path d="M553 280V396" stroke="#6b1516" stroke-width="1"/><path d="m553 277 2 6h-4zM553 398l2-6h-4z" fill="#4e1011"/>
      <path d="M537 260Q542 245 552 234M557 228Q562 224 570 225" stroke="#555" fill="none" stroke-width=".8"/>
      <ellipse cx="554" cy="232" rx="2.500" ry="5.500" fill="#fff" stroke="#222" stroke-width="1" transform="rotate(12 554 232)"/><circle cx="554" cy="232" r="1" fill="#222"/>
      <path d="m554 260 7 8h-3v7h-8v-7h-3z" fill="#333" stroke="#d8b0ae" stroke-width="1"/><path d="m554 262 5 5h-3v2h-4v-2h-3z" fill="#fff"/><path d="M552 270h4M552 272h4M552 274h4" stroke="#fff" stroke-width="1"/>
    </svg>`;
  }
}

@customElement("view-cube")
export class ViewCube extends LitElement {
  static styles = css`
    :host { display: block; }
    text { font-family: "Noto Sans CJK JP", sans-serif; fill: #777; text-anchor: middle; }
    .axis { font: 700 20px "Liberation Sans", sans-serif; }
    .x { fill: #e86464; }
    .y { fill: #79dd79; }
    .z { fill: #6a6aec; }
  `;
  render() {
    return html`<svg viewBox="240 15 156 174" width="52" height="58" role="img" aria-label="ViewCube">
      <defs><filter id="sh"><feGaussianBlur stdDeviation="5"/></filter></defs>
      <path d="m268 150 62 30 40-30-10-20z" fill="#888" opacity=".4" filter="url(#sh)"/>
      <path d="M305 52V36" stroke="#6a6aec" stroke-width="3"/><path d="m268 148-10 8" stroke="#e86464" stroke-width="3"/><path d="M362 128h12" stroke="#79dd79" stroke-width="3"/>
      <path d="m265 85 40-33 63 18-33 35z" fill="#f3f3f3"/><path d="m265 85 70 20-3 67-64-22z" fill="#eaeaea"/><path d="m335 105 33-35-6 70-30 32z" fill="#dadada"/>
      <path d="m265 85 40-33 63 18-33 35zM265 85l3 65 64 22 3-67M332 172l30-32 6-70" fill="none" stroke="#aaa" stroke-width="2" stroke-dasharray="9 4"/>
      <text x="301" y="142" font-size="38" transform="rotate(10 301 130)">右</text>
      <text x="316" y="90" font-size="28" transform="rotate(196 316 79)">上</text>
      <text x="350" y="130" font-size="22" transform="rotate(-20 350 122)">後</text>
      <text class="axis z" x="304" y="33">Z</text><text class="axis x" x="254" y="166">X</text><text class="axis y" x="383" y="138">Y</text>
    </svg>`;
  }
}

@customElement("nav-bar")
export class NavBar extends LitElement {
  static styles = [shared, css`
    :host { display: flex; align-items: center; gap: 4px; height: 14px; padding: 0 3px; background: #f3f3f3; }
    .sep { width: 1px; height: 10px; background: #ccc; }
  `];
  render() {
    const tools: [string, boolean][] = [["orbit", true], ["look", false], ["hand", false], ["zoomPan", false], ["fit", true], ["display", true], ["shade", true], ["views", true]];
    return html`${tools.map(([n, d]) => html`<button aria-label=${n}>${icon(n, 9)}${d ? caret : nothing}</button>`)}
      <span class="sep"></span>
      ${["solidBox", "solidEdge", "solidEdge", "wire", "wireFront", "wireFront"].map((n) => html`<button aria-label=${n}>${icon(n, 9)}</button>`)}`;
  }
}

const TIMELINE = ["sphere", "offset", "tlMove", "tlSketch", "solid", "fillet", "mirror", "solid", "tlSketch", "solid", "plane1", "tlCurrent"];

@customElement("time-line")
export class TimeLine extends LitElement {
  static styles = [shared, css`
    :host { display: flex; box-sizing: border-box; align-items: center; height: 26px; padding: 0 7px 0 4px; background: #f1f1f1; border-top: 1px solid #dadada; }
    .play { display: flex; gap: 5px; width: 70px; }
    .track { height: 15px; border-bottom: 1px solid #bbb; display: flex; width: 151px; }
    .track button { flex: 1; height: 13px; }
    .track .on { background: #0f8fd6; }
    .mark { margin: 0 auto 0 -5px; }
  `];
  render() {
    return html`<div class="play">${["first", "prev", "play", "next", "last"].map((n) => html`<button aria-label=${n}>${icon(n, 8)}</button>`)}</div>
      <div class="track">${TIMELINE.map((n) => html`<button class=${n === "tlCurrent" ? "on" : ""} aria-label=${n}>${icon(n, 10)}</button>`)}</div>
      <svg class="mark ic" viewBox="0 0 8 18" width="8" height="18"><path d="M0 1h8v3L5 7v10H4V7L0 4z" fill="#555"/></svg>
      <button aria-label="環境設定">${icon("gear", 8)}</button>`;
  }
}

@customElement("app-root")
export class AppRoot extends LitElement {
  static styles = css`
    :host { display: flex; flex-direction: column; height: 100vh; overflow: hidden; background: #fff; color: #444;
      font: 6px/10px "Liberation Sans", "Noto Sans CJK JP", sans-serif; font-feature-settings: "palt"; }
    .view { position: relative; flex: 1; min-height: 0; }
    .model { position: absolute; inset: 0; }
    .browser { position: absolute; left: 2px; top: 3px; }
    .cube { position: absolute; right: 7px; top: 4px; }
    .dialog { position: absolute; right: 2px; top: 66px; }
    .nav { position: absolute; left: 50%; bottom: 3px; transform: translateX(-50%); }
    .info { position: absolute; right: 9px; bottom: 3px; font-weight: 700; color: #333; }
  `;
  render() {
    return html`<title-area></title-area><tool-ribbon></tool-ribbon>
      <div class="view">
        <part-model class="model"></part-model>
        <browser-panel class="browser"></browser-panel>
        <view-cube class="cube"></view-cube>
        <extrude-dialog class="dialog"></extrude-dialog>
        <nav-bar class="nav"></nav-bar>
        <div class="info">1 プロファイル | 面積 : 1250.00 mm^2</div>
      </div>
      <time-line></time-line>`;
  }
}
